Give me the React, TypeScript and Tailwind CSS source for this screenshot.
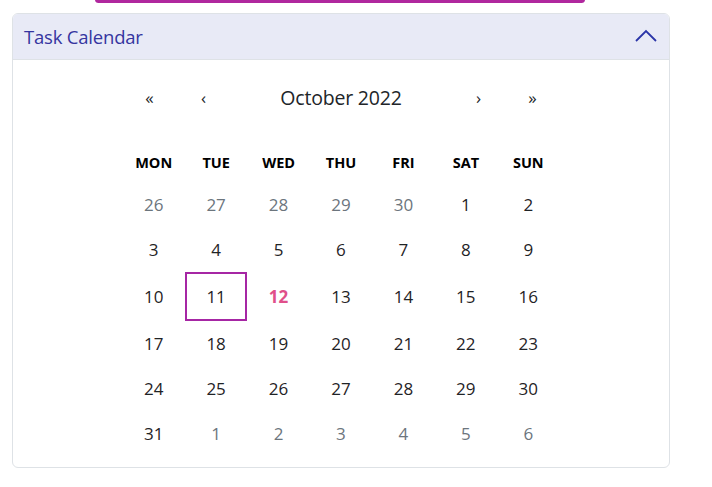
import React from "react";

const days: { d: number; muted?: boolean }[][] = [
  [{ d: 26, muted: true }, { d: 27, muted: true }, { d: 28, muted: true }, { d: 29, muted: true }, { d: 30, muted: true }, { d: 1 }, { d: 2 }],
  [{ d: 3 }, { d: 4 }, { d: 5 }, { d: 6 }, { d: 7 }, { d: 8 }, { d: 9 }],
  [{ d: 10 }, { d: 11 }, { d: 12 }, { d: 13 }, { d: 14 }, { d: 15 }, { d: 16 }],
  [{ d: 17 }, { d: 18 }, { d: 19 }, { d: 20 }, { d: 21 }, { d: 22 }, { d: 23 }],
  [{ d: 24 }, { d: 25 }, { d: 26 }, { d: 27 }, { d: 28 }, { d: 29 }, { d: 30 }],
  [{ d: 31 }, { d: 1, muted: true }, { d: 2, muted: true }, { d: 3, muted: true }, { d: 4, muted: true }, { d: 5, muted: true }, { d: 6, muted: true }],
];

const weekdays = ["MON", "TUE", "WED", "THU", "FRI", "SAT", "SUN"];

export default function App() {
  return (
    <div className="w-[712px] h-[487px] bg-white relative overflow-hidden" style={{ fontFamily: '"Open Sans", "Noto Sans", sans-serif' }}>
      <div className="absolute left-[95px] top-[-4px] w-[490px] h-[7px] rounded-md bg-[#b0279e]" />
      <div className="pt-[13px] pl-[12px]">
        <div className="w-[658px] h-[455px] border border-[#dee2e6] rounded-[6px] overflow-hidden flex flex-col">
          <div className="h-[46px] bg-[#e8eaf6] border-b border-[#dee2e6] flex items-center justify-between pl-[11px] pr-[12px]">
            <span className="text-[18.5px] text-[#3535a0] tracking-[-0.2px] mt-[1px]">Task Calendar</span>
            <svg width="22" height="13" viewBox="0 0 22 13" className="mt-[-2px]">
              <path d="M1 12 L11 2 L21 12" fill="none" stroke="#2b35a8" strokeWidth="1.8" />
            </svg>
          </div>
          <div className="flex flex-col items-center pt-[15px]">
            <div className="w-[437px] h-[46px] flex items-center text-[#212529]">
              <div className="w-[54px] text-center text-[17px]">«</div>
              <div className="w-[54px] text-center text-[17px]">‹</div>
              <div className="flex-1 text-center text-[19.5px] tracking-[-0.2px]">October 2022</div>
              <div className="w-[54px] text-center text-[17px]">›</div>
              <div className="w-[54px] text-center text-[17px]">»</div>
            </div>
            <div className="w-[437px] mt-[23px] grid grid-cols-7 h-[38px] items-center">
              {weekdays.map((w) => (
                <div key={w} className="text-center text-[14.5px] font-bold text-black">{w}</div>
              ))}
            </div>
            <div className="w-[437px] flex flex-col">
              {days.map((row, ri) => (
                <div key={ri} className={`grid grid-cols-7 ${ri === 2 ? "h-[49px]" : "h-[45px]"}`}>
                  {row.map((c, ci) => {
                    const selected = ri === 2 && ci === 1;
                    const today = ri === 2 && ci === 2;
                    return (
                      <div key={ci} className="flex items-center justify-center">
                        <div
                          className={`flex items-center justify-center text-[17px] ${
                            selected ? "w-[62px] h-[49px] border-2 border-[#a626a4]" : "w-[62px] h-full"
                          } ${c.muted ? "text-[#6c757d]" : today ? "text-[#e0508a] font-bold" : "text-[#1f2326]"}`}
                        >
                          {c.d}
                        </div>
                      </div>
                    );
                  })}
                </div>
              ))}
            </div>
          </div>
        </div>
      </div>
    </div>
  );
}
